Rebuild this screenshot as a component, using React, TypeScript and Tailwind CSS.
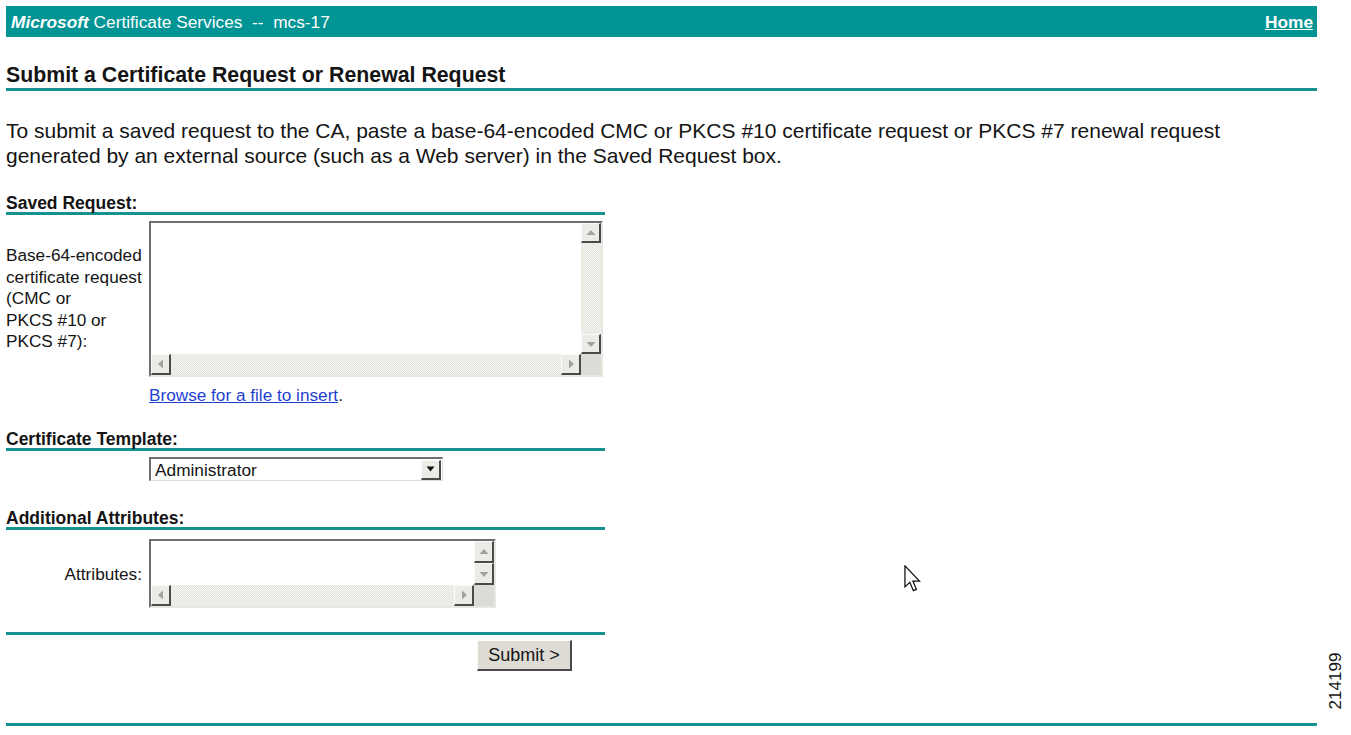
import React from "react";

type Dir = "up" | "down" | "left" | "right";

function Arrow({ dir }: { dir: Dir }) {
  const pts: Record<Dir, string> = {
    up: "0.5,7 5,2 9.5,7",
    down: "0.5,3 5,8 9.5,3",
    left: "7,0.5 2,5 7,9.5",
    right: "3,0.5 8,5 3,9.5",
  };
  return (
    <svg width="10" height="10" viewBox="0 0 10 10">
      <polygon points={pts[dir]} fill="#a3a29d" />
    </svg>
  );
}

function SBtn({ dir, w = 20, h = 20 }: { dir: Dir; w?: number; h?: number }) {
  return (
    <div
      className="shrink-0 bg-[#ecebe6] border-t border-l border-t-[#fbfbf9] border-l-[#fbfbf9] border-r-2 border-b-2 border-r-[#4a4a4a] border-b-[#4a4a4a] flex items-center justify-center"
      style={{ width: w, height: h }}
    >
      <Arrow dir={dir} />
    </div>
  );
}

const track =
  "bg-[repeating-conic-gradient(#e4e3dc_0_25%,#f5f4f0_0_50%)] bg-[length:2px_2px]";

function FakeTextarea({ width, height }: { width: number; height: number }) {
  return (
    <div
      className="shrink-0 border-t-2 border-l-2 border-t-[#6e6e6e] border-l-[#6e6e6e] border-b-2 border-r-2 border-b-[#e8e7e2] border-r-[#e8e7e2] grid grid-cols-[1fr_20px] grid-rows-[1fr_21px] bg-white"
      style={{ width, height }}
    >
      <div className="bg-white" />
      <div className={`flex flex-col ${track}`}>
        <SBtn dir="up" />
        <div className="flex-1" />
        <SBtn dir="down" />
      </div>
      <div className={`flex ${track}`}>
        <SBtn dir="left" h={21} />
        <div className="flex-1" />
        <SBtn dir="right" h={21} />
      </div>
      <div className="bg-[#dcdbd5]" />
    </div>
  );
}

export default function App() {
  return (
    <div className="relative w-[1351px] h-[735px] overflow-hidden bg-white text-[#141414] font-['Liberation_Sans',Arial,sans-serif]">
      <div className="ml-[6px] pt-[6px] w-[1311px]">
        {/* header bar */}
        <div className="h-[31px] bg-[#009494] flex items-center justify-between pl-[5px] pr-[4px] text-white text-[17.3px] leading-[20px]">
          <div>
            <span className="font-bold italic">Microsoft</span> Certificate Services&nbsp; --&nbsp; mcs-17
          </div>
          <a className="font-bold underline text-white" href="#">
            Home
          </a>
        </div>

        {/* title */}
        <div className="mt-[26px] text-[21.3px] font-bold leading-[24px] pb-[1px] border-b-[3px] border-[#15918f]">
          Submit a Certificate Request or Renewal Request
        </div>

        <p className="mt-[27px] text-[21px] leading-[25px]">
          To submit a saved request to the CA, paste a base-64-encoded CMC or PKCS #10 certificate request or PKCS #7 renewal request
          <br />
          generated by an external source (such as a Web server) in the Saved Request box.
        </p>

        <div className="w-[599px]">
          {/* Saved Request */}
          <div className="mt-[26px] text-[17.5px] font-bold leading-[18px] border-b-[3px] border-[#15918f]">
            Saved Request:
          </div>
          <div className="mt-[6px] flex items-center">
            <div className="w-[143px] text-[17.2px] leading-[21.5px]">
              Base-64-encoded
              <br />
              certificate request
              <br />
              (CMC or
              <br />
              PKCS #10 or
              <br />
              PKCS #7):
            </div>
            <FakeTextarea width={454} height={156} />
          </div>
          <div className="mt-[8px] ml-[143px] text-[17.2px] leading-[20px]">
            <a href="#" className="text-[#1d3fd0] underline">
              Browse for a file to insert
            </a>
            .
          </div>

          {/* Certificate Template */}
          <div className="mt-[25px] text-[17.5px] font-bold leading-[18px] border-b-[3px] border-[#15918f]">
            Certificate Template:
          </div>
          <div className="mt-[6px] ml-[143px] w-[294px] h-[24px] border-t-2 border-l-2 border-t-[#6e6e6e] border-l-[#6e6e6e] border-b border-r border-b-[#dcdbd5] border-r-[#dcdbd5] flex items-center bg-white">
            <div className="flex-1 pl-[4px] text-[17.3px] leading-[20px]">Administrator</div>
            <div className="w-[20px] h-[20px] bg-[#ecebe6] border-t border-l border-t-[#fbfbf9] border-l-[#fbfbf9] border-r-2 border-b-2 border-r-[#4a4a4a] border-b-[#4a4a4a] flex items-center justify-center mr-[1px]">
              <svg width="9" height="6" viewBox="0 0 9 6">
                <polygon points="0.5,0.5 8.5,0.5 4.5,5.5" fill="#111" />
              </svg>
            </div>
          </div>

          {/* Additional Attributes */}
          <div className="mt-[28px] text-[17.5px] font-bold leading-[18px] border-b-[3px] border-[#15918f]">
            Additional Attributes:
          </div>
          <div className="mt-[9px] flex items-center">
            <div className="w-[143px] pr-[7px] text-right text-[17.2px] leading-[20px]">Attributes:</div>
            <div className="w-[347px] h-[69px] border-t-2 border-l-2 border-t-[#6e6e6e] border-l-[#6e6e6e] border-b-2 border-r-2 border-b-[#e8e7e2] border-r-[#e8e7e2] grid grid-cols-[1fr_20px] grid-rows-[1fr_21px] bg-white">
              <div className="bg-white" />
              <div className={`flex flex-col ${track}`}>
                <SBtn dir="up" h={22} />
                <SBtn dir="down" h={22} />
              </div>
              <div className={`flex ${track}`}>
                <SBtn dir="left" h={21} />
                <div className="flex-1" />
                <SBtn dir="right" h={21} />
              </div>
              <div className="bg-[#dcdbd5]" />
            </div>
          </div>

          <div className="mt-[24px] border-b-[3px] border-[#15918f]" />
          <div className="mt-[5px] ml-[471px]">
            <button className="w-[95px] h-[31px] bg-[#dddbd4] border-t border-l border-t-[#fbfbf9] border-l-[#fbfbf9] border-r-2 border-b-2 border-r-[#4a4a4a] border-b-[#4a4a4a] text-[18px] leading-[20px] text-[#141414]">
              Submit &gt;
            </button>
          </div>
        </div>

        <div className="mt-[52px] border-b-[3px] border-[#15918f]" />
      </div>

      {/* mouse cursor */}
      <svg
        className="absolute left-[904px] top-[565px]"
        width="17"
        height="28"
        viewBox="0 0 12 20"
      >
        <path
          d="M0.6 0.6 L0.6 15.6 L4.1 12.3 L6.6 18.3 L8.8 17.4 L6.3 11.5 L11 11.5 Z"
          fill="#fff"
          stroke="#111"
          strokeWidth="0.9"
          strokeLinejoin="miter"
        />
      </svg>

      {/* figure number */}
      <div className="absolute left-[1305px] top-[671px] w-[62px] h-[20px] -rotate-90 text-[17px] leading-[20px] text-center text-[#141414]">
        214199
      </div>
    </div>
  );
}
